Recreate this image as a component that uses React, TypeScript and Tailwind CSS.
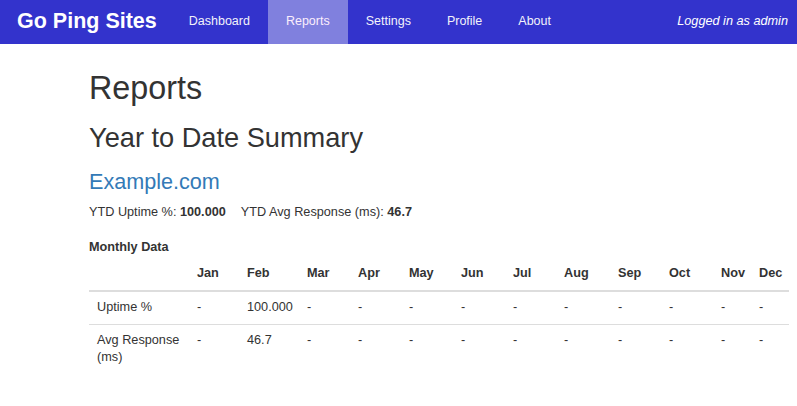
import React from "react";

const months = ["Jan","Feb","Mar","Apr","May","Jun","Jul","Aug","Sep","Oct","Nov","Dec"];
const widths = ["w-[50px]","w-[60px]","w-[51px]","w-[51px]","w-[52px]","w-[52px]","w-[51px]","w-[54px]","w-[51px]","w-[52px]","w-[38px]","w-[38px]"];
const uptime = ["-","100.000","-","-","-","-","-","-","-","-","-","-"];
const resp = ["-","46.7","-","-","-","-","-","-","-","-","-","-"];

export default function App() {
  const navLinks = ["Dashboard", "Reports", "Settings", "Profile", "About"];
  return (
    <div className="min-h-[406px] bg-white text-[#333333] text-[12.7px] leading-[17.8px]" style={{ fontFamily: '"Liberation Sans", Arial, sans-serif' }}>
      <nav className="h-[44px] bg-[#3333cc] flex items-stretch">
        <div className="pl-[17px] pr-[14px] flex items-center text-[21.5px] font-bold text-white">Go Ping Sites</div>
        <ul className="flex items-stretch text-[12.5px]">
          {navLinks.map((l) => (
            <li key={l} className={`flex items-center px-[18px] ${l === "Reports" ? "bg-[#8080de] text-[#fbeefc]" : "text-[#f2f2fa]"}`}>{l}</li>
          ))}
        </ul>
        <div className="ml-auto pr-[9px] flex items-center italic text-white">Logged in as admin</div>
      </nav>
      <main className="pl-[89px] pr-[8px]">
        <h1 className="mt-[27px] text-[32.3px] leading-[35px]">Reports</h1>
        <h2 className="mt-[17px] text-[27.2px] leading-[29px]">Year to Date Summary</h2>
        <h3 className="mt-[18px] text-[21.6px] leading-[23.5px] text-[#337ab7]">Example.com</h3>
        <p className="mt-[10px]">
          YTD Uptime %: <b>100.000</b>
          <span className="ml-[15px]">YTD Avg Response (ms): <b>46.7</b></span>
        </p>
        <h5 className="mt-[18px] font-bold">Monthly Data</h5>
        <table className="mt-[1px] w-[700px] table-fixed border-collapse">
          <thead>
            <tr className="border-b-[2px] border-[#dddddd]">
              <th className="w-[100px] p-[7px]"></th>
              {months.map((m, i) => (
                <th key={m} className={`${widths[i]} p-[7px] pl-[8px] text-left font-bold`}>{m}</th>
              ))}
            </tr>
          </thead>
          <tbody>
            <tr className="border-b border-[#dddddd]">
              <td className="p-[7px] pl-[8px] align-top">Uptime %</td>
              {uptime.map((v, i) => (
                <td key={i} className="p-[7px] pl-[8px] align-top">{v}</td>
              ))}
            </tr>
            <tr>
              <td className="p-[7px] pl-[8px] align-top">Avg Response (ms)</td>
              {resp.map((v, i) => (
                <td key={i} className="p-[7px] pl-[8px] align-top">{v}</td>
              ))}
            </tr>
          </tbody>
        </table>
      </main>
    </div>
  );
}
